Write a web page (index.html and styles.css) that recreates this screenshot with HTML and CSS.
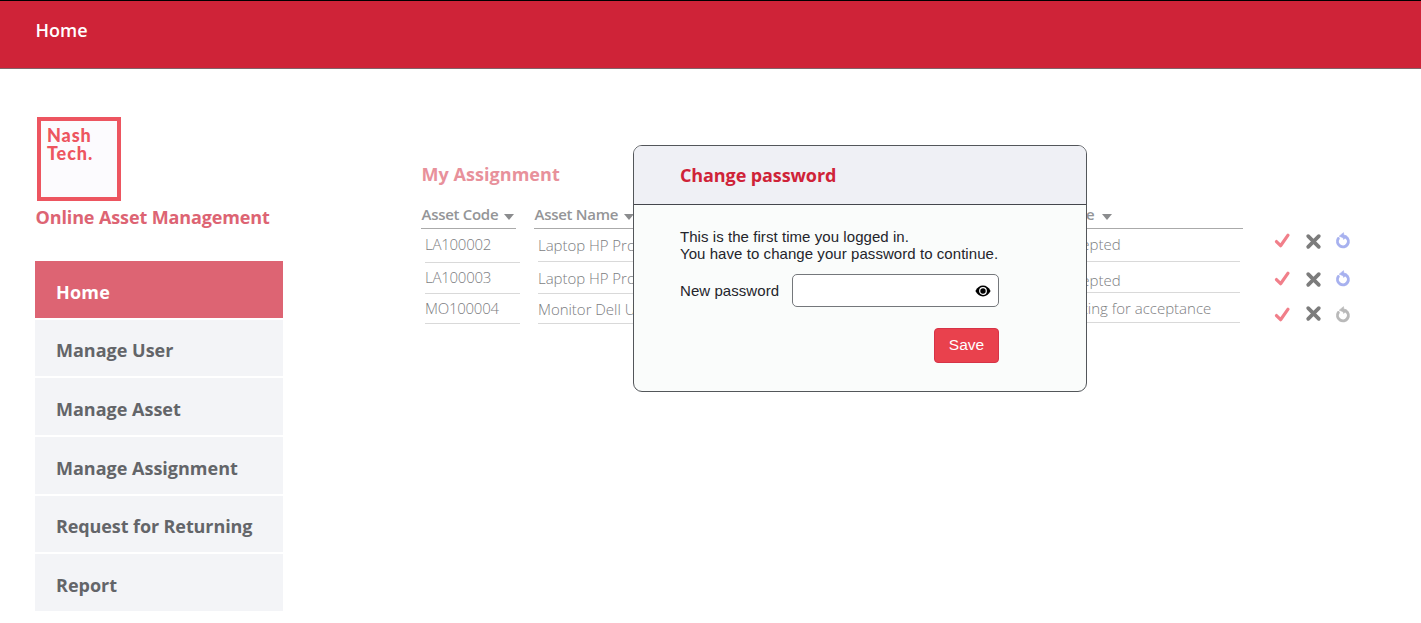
FILE: index.html
```html
<!DOCTYPE html>
<html lang="en">
<head>
<meta charset="utf-8">
<title>Online Asset Management</title>
<link rel="stylesheet" href="styles.css">
</head>
<body>
<svg class="defs" width="0" height="0">
  <symbol id="check" viewBox="0 0 16 16"><path d="M2.3 9 6.2 12.9 13.2 3" fill="none" stroke="currentColor" stroke-width="3" stroke-linecap="round" stroke-linejoin="round"/></symbol>
  <symbol id="cross" viewBox="0 0 16 16"><path d="M3 3 13 13M13 3 3 13" fill="none" stroke="currentColor" stroke-width="3.5" stroke-linecap="round"/></symbol>
  <symbol id="undo" viewBox="0 0 16 16"><path d="M3.1 6.2A5.1 5.1 0 1 0 10.2 4.6" fill="none" stroke="currentColor" stroke-width="2.8" stroke-linecap="round"/><path d="M4 3.9 8 .6 8.2 2.7 11.2 4 8.2 7 7.6 5.4Z" fill="currentColor" stroke="currentColor" stroke-width=".6" stroke-linejoin="round"/></symbol>
</svg>
<header class="topbar"><span class="crumb">Home</span></header>
<div class="layout">
  <aside class="sidebar">
    <div class="logo"><span>Nash</span><span>Tech.</span></div>
    <div class="brand">Online Asset Management</div>
    <nav class="menu">
      <a class="item active">Home</a>
      <a class="item up">Manage User</a>
      <a class="item">Manage Asset</a>
      <a class="item">Manage Assignment</a>
      <a class="item up tight">Request for Returning</a>
      <a class="item">Report</a>
    </nav>
  </aside>
  <main class="content">
    <h1 class="title">My Assignment</h1>
    <div class="table">
      <div class="col code">
        <div class="head"><span>Asset Code</span><i class="caret"></i></div>
        <div class="cell r1">LA100002</div>
        <div class="cell r2">LA100003</div>
        <div class="cell r3">MO100004</div>
      </div>
      <div class="col name">
        <div class="head"><span>Asset Name</span><i class="caret"></i></div>
        <div class="cell r1">Laptop HP Pro</div>
        <div class="cell r2">Laptop HP Pro</div>
        <div class="cell r3">Monitor Dell U</div>
      </div>
      <div class="col state">
        <div class="head"><span>State</span><i class="caret"></i></div>
        <div class="cell r1">Accepted</div>
        <div class="cell r2">Accepted</div>
        <div class="cell r3">Waiting for acceptance</div>
      </div>
      <div class="actions">
        <div class="check"><svg><use href="#check"/></svg><svg><use href="#check"/></svg><svg><use href="#check"/></svg></div>
        <div class="cross"><svg><use href="#cross"/></svg><svg><use href="#cross"/></svg><svg><use href="#cross"/></svg></div>
        <div class="undo"><svg><use href="#undo"/></svg><svg><use href="#undo"/></svg><svg class="off"><use href="#undo"/></svg></div>
      </div>
    </div>
  </main>
</div>
<section class="modal">
  <div class="modal-head">Change password</div>
  <div class="modal-body">
    <p class="msg">This is the first time you logged in.<br>You have to change your password to continue.</p>
    <div class="field">
      <label>New password</label>
      <div class="input"><svg class="eye" viewBox="0 0 16 12"><path d="M.4 6C2.2 2.5 4.8.6 8 .6S13.8 2.5 15.6 6C13.8 9.5 11.2 11.4 8 11.4S2.2 9.5.4 6Z"/><circle cx="8" cy="6" r="3.3" fill="none" stroke="#fff" stroke-width="1.2"/></svg></div>
    </div>
    <button class="save">Save</button>
  </div>
</section>
</body>
</html>
```

FILE: styles.css
```css
* { box-sizing: border-box; }
body { margin: 0; width: 1421px; height: 623px; overflow: hidden; position: relative; background: #fff; font-family: "Open Sans", "Noto Sans", sans-serif; }
.defs { display: block; height: 0; }
.topbar { height: 69px; background: #cf2338; border-top: 1px solid #000; border-bottom: 1px solid #82636a; padding: 17px 35.5px; color: #fff; font-size: 18px; font-weight: 600; line-height: 25px; }
.layout { display: flex; }
.sidebar { width: 248px; margin-left: 35px; padding-top: 48px; }
.logo { display: flex; flex-direction: column; width: 84px; height: 84px; margin-left: 2px; border: 4px solid #ed5560; background: #fcfbfe; padding: 5px 0 0 6px; font: 900 18px/18px Lato, sans-serif; letter-spacing: .9px; color: #ed5560; }
.brand { height: 34px; line-height: 32px; padding-left: .5px; font-size: 18px; font-weight: 700; letter-spacing: -.12px; color: #dd6473; white-space: nowrap; }
.menu { display: flex; flex-direction: column; gap: 2px; padding-top: 26px; }
.item { height: 56.7px; padding: 5px 0 0 21px; line-height: 53px; background: #f3f4f7; color: #636569; font-size: 18px; font-weight: 700; white-space: nowrap; }
.item.active { background: #dd6473; color: #fff; letter-spacing: .2px; }
.item.up { padding-top: 4px; }
.item.tight { letter-spacing: -.1px; }
.content { margin-left: 138px; padding-top: 90px; }
.title { margin: 0; height: 43px; line-height: 30px; padding-left: .5px; font-size: 18px; font-weight: 700; letter-spacing: .05px; color: #e8919b; white-space: nowrap; }
.table { display: flex; height: 125px; }
.col { white-space: nowrap; color: #7c7d7f; }
.code { width: 95px; margin-right: 18px; }
.name { width: 460px; }
.state { width: 187px; margin-left: 62px; }
.head { height: 27px; border-bottom: 1px solid #aaa; display: flex; align-items: center; padding-left: .6px; font-size: 15px; line-height: 23px; padding-bottom: 2px; font-weight: 600; letter-spacing: -.3px; color: #949597; }
.caret { margin: 5px 0 0 6px; border: 5.5px solid transparent; border-top: 6px solid #8b8c8e; border-bottom: 0; }
.state .head { padding-left: 2.5px; }
.state .caret { margin-left: 8px; }
.cell { border-bottom: 1px solid #d9d9d9; font-size: 15px; font-weight: 300; margin-left: 4px; }
.code .cell { width: 95px; letter-spacing: -.25px; }
.name .cell { letter-spacing: -.03px; }
.state .cell { margin: 0 3px 0 2px; }
.r1 { height: 34px; line-height: 31px; }
.r2 { height: 31px; line-height: 31px; }
.r3 { height: 30px; line-height: 30px; }
.state .r1 { height: 33px; }
.state .r3 { line-height: 31px; }
.code .r2, .code .r3 { line-height: 29px; }
.name .r1 { height: 33px; line-height: 33px; }
.name .r2 { height: 32px; line-height: 33px; }
.actions { display: flex; gap: 14px; margin: 30px 0 0 31px; }
.state .r2 { line-height: 37px; }
.actions > div { display: flex; flex-direction: column; flex: none; }
.actions svg { flex: none; display: block; width: 17px; height: 17px; margin-bottom: 21px; }
.actions svg:nth-child(2) { margin-bottom: 19px; }
.check { color: #f17f8a; }
.cross { color: #7c7c7c; padding-top: .5px; }
.cross svg:nth-child(2) { margin-bottom: 17px; }
.undo { color: #a7b1ef; margin-left: -1px; }
.off { color: #b9b9b9; }
.modal { position: absolute; left: 633px; top: 145px; width: 454px; height: 247px; border: 1px solid #53565a; border-radius: 9px; background: #fafcfb; overflow: hidden; }
.modal-head { height: 59px; background: #eff0f5; border-bottom: 1px solid #44464c; padding-left: 46px; font-size: 18px; line-height: 58px; font-weight: 700; letter-spacing: -.1px; color: #cf2338; }
.modal-body { padding: 23px 87px 0 46px; font: 15px/17px "Liberation Sans", Arial, sans-serif; letter-spacing: .06px; color: #24252b; }
.msg { margin: 0; white-space: nowrap; }
.field { display: flex; justify-content: space-between; align-items: center; margin-top: 12px; white-space: nowrap; }
.input { width: 207px; height: 33px; border: 1px solid #74777b; border-radius: 5px; background: #fff; display: flex; align-items: center; justify-content: flex-end; padding-right: 7px; }
.eye { width: 16px; height: 12px; }
.save { display: block; margin: 21px 0 0 auto; width: 65px; height: 35px; padding: 0 0 2px; border: 1px solid #d63347; border-radius: 4px; background: #e9414d; color: #fff; font: 15.5px "Liberation Sans", Arial, sans-serif; }
```
